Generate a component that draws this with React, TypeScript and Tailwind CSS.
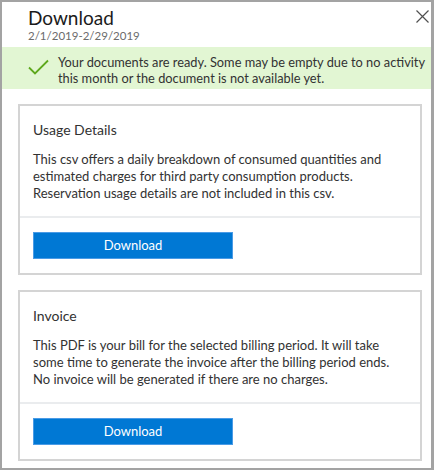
import React from 'react';

const font = { fontFamily: '"Segoe UI", Lato, "Liberation Sans", sans-serif' };

function CheckIcon() {
  return (
    <svg width="21" height="16" viewBox="0 0 21 16" fill="none" className="shrink-0">
      <path d="M1 8.5 L7 14.5 L20 1.5" stroke="#5ea81c" strokeWidth="1.8" />
    </svg>
  );
}

function CloseIcon() {
  return (
    <svg width="13" height="13" viewBox="0 0 13 13" fill="none">
      <path d="M0.5 0.5 L12.5 12.5 M12.5 0.5 L0.5 12.5" stroke="#505050" strokeWidth="1.2" />
    </svg>
  );
}

function DocCard({ title, lines }: { title: string; lines: string[] }) {
  return (
    <div className="ml-[16px] w-[404px] border-2 border-[#d4d4d4] bg-white">
      <div className="px-[13px] pt-[14px] pb-[14px]">
        <div className="text-[14px] leading-[20px] text-[#323232]">{title}</div>
        <div className="mt-[11px] text-[13px] leading-[17px] text-[#323232]">
          {lines.map((l) => (
            <div key={l} className="whitespace-nowrap">{l}</div>
          ))}
        </div>
      </div>
      <div className="border-t-2 border-[#eaecee] px-[13px] py-[14px]">
        <button className="flex h-[27px] w-[200px] items-center justify-center border border-[#4a9be6] bg-[#0078d4] text-[13px] text-white">
          Download
        </button>
      </div>
    </div>
  );
}

export default function App() {
  return (
    <div
      className="flex h-[470px] w-[434px] flex-col border-2 border-r-[3px] border-[#a3a3a3] bg-white"
      style={font}
    >
      {/* Header */}
      <div className="relative px-[26px] pt-[5px]">
        <div className="text-[19px] leading-[22px] text-[#1b1b1b]">Download</div>
        <div className="text-[11.5px] leading-[13px] text-[#6b6b6b]">2/1/2019-2/29/2019</div>
        <button className="absolute right-[2px] top-[8px]" aria-label="Close">
          <CloseIcon />
        </button>
      </div>

      {/* Success banner */}
      <div className="mt-[5px] flex h-[42px] items-start gap-[9px] bg-[#e2f6d3] pl-[26px] pt-[7px]">
        <div className="pt-[5px]">
          <CheckIcon />
        </div>
        <div className="text-[12.8px] leading-[16px] text-[#323232]">
          <div>Your documents are ready. Some may be empty due to no activity</div>
          <div>this month or the document is not available yet.</div>
        </div>
      </div>

      <div className="mt-[15px] flex flex-col gap-[15px]">
        <DocCard
          title="Usage Details"
          lines={[
            'This csv offers a daily breakdown of consumed quantities and',
            'estimated charges for third party consumption products.',
            'Reservation usage details are not included in this csv.',
          ]}
        />
        <DocCard
          title="Invoice"
          lines={[
            'This PDF is your bill for the selected billing period. It will take',
            'some time to generate the invoice after the billing period ends.',
            'No invoice will be generated if there are no charges.',
          ]}
        />
      </div>
    </div>
  );
}
